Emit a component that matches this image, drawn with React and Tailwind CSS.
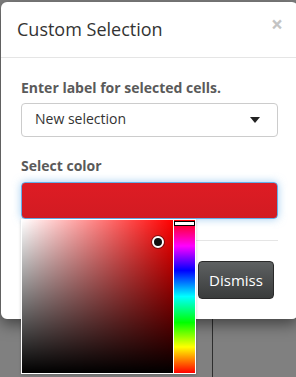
export default function App() {
  const font = { fontFamily: '"Open Sans", "Liberation Sans", sans-serif' }
  return (
    <div className="relative w-[296px] h-[377px] overflow-hidden bg-[#808080]" style={font}>
      {/* page behind the overlay */}
      <div className="absolute left-[212px] top-[300px] w-px h-[80px] bg-[#2e2e2e]" />

      {/* Modal */}
      <div className="relative ml-[1px] mt-[2px] w-[297px] rounded-[6px] bg-white shadow-[0_5px_15px_rgba(0,0,0,0.5)]">
        <div className="flex items-start justify-between border-b border-[#e5e5e5] py-[15px] pl-[16px] pr-[12px]">
          <h4 className="text-[18px] leading-[25px] text-[#333]">Custom Selection</h4>
          <span className="text-[21px] font-bold leading-[21px] text-[#c4c4c4] mt-[-3px] mr-[3px]">×</span>
        </div>

        <div className="px-[20px] pt-[20px] pb-[21px]">
          <label className="block text-[14px] font-bold leading-[20px] text-[#5a5a5a] mb-[5px]">
            Enter label for selected cells.
          </label>
          <div className="flex items-center justify-between h-[34px] rounded-[4px] border border-[#cccccc] pl-[13px] pr-[17px]">
            <span className="text-[14px] leading-[20px] text-[#333] mt-[-2px]">New selection</span>
            <svg width="10" height="6" viewBox="0 0 10 6"><path d="M0 0h10L5 6z" fill="#222" /></svg>
          </div>

          <label className="block text-[14px] font-bold leading-[20px] text-[#5a5a5a] mt-[19px] mb-[6px]">
            Select color
          </label>
          <div className="h-[37px] rounded-[4px] border border-[#66afe9] bg-gradient-to-b from-[#de1c24] to-[#d21b22] shadow-[0_0_8px_rgba(102,175,233,0.6)]" />
        </div>

        <div className="mx-[20px] border-t border-[#e5e5e5] pt-[20px] pb-[20px] flex justify-end pr-[4px]">
          <button className="h-[38px] w-[76px] rounded-[4px] border border-[#2a2a2a] bg-gradient-to-b from-[#5e6162] to-[#3a3c3c] text-[15px] text-white">
            Dismiss
          </button>
        </div>
      </div>

      {/* Color picker popup */}
      <div className="absolute left-[21px] top-[219px] w-[175px] h-[155px] bg-white p-[1px] flex gap-[1px] shadow-[0_1px_3px_rgba(0,0,0,0.2)]">
        <div className="relative w-[151px] h-full bg-[#ff0000]">
          <div className="absolute inset-0 bg-gradient-to-r from-white to-transparent" />
          <div className="absolute inset-0 bg-gradient-to-b from-transparent to-black" />
          <div className="absolute left-[130px] top-[16px] w-[12px] h-[12px] rounded-full bg-[#111] border-2 border-white shadow-[0_0_0_1px_rgba(0,0,0,0.4)]" />
        </div>
        <div className="relative w-[21px] h-full bg-[linear-gradient(to_bottom,#ff0000,#ff00ff_17%,#0000ff_33%,#00ffff_50%,#00ff00_67%,#ffff00_83%,#ff0000)]">
          <div className="absolute left-0 right-0 top-[1px] h-[5px] bg-white border border-black" />
        </div>
      </div>
    </div>
  )
}
